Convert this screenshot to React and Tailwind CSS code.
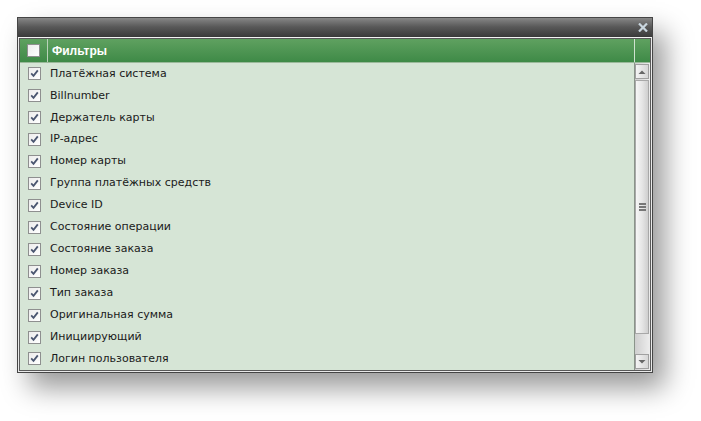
import React from "react";

const items = [
  "Платёжная система",
  "Billnumber",
  "Держатель карты",
  "IP-адрес",
  "Номер карты",
  "Группа платёжных средств",
  "Device ID",
  "Состояние операции",
  "Состояние заказа",
  "Номер заказа",
  "Тип заказа",
  "Оригинальная сумма",
  "Инициирующий",
  "Логин пользователя",
];

function Box({ checked }) {
  return (
    <div className="w-[13px] h-[13px] border border-[#8e8f8f] bg-gradient-to-br from-[#d4d4d4] to-white flex items-center justify-center">
      <div className="w-[11px] h-[11px] bg-gradient-to-br from-[#ececec] to-white flex items-center justify-center">
        {checked && (
          <svg width="9" height="9" viewBox="0 0 9 9">
            <path d="M1.2 4.4 L3.5 6.8 L7.8 1.4" fill="none" stroke="#4a5670" strokeWidth="1.8" />
          </svg>
        )}
      </div>
    </div>
  );
}

function Arrow({ up }) {
  return (
    <div className="w-[14px] h-[15px] border border-[#a0a0a0] bg-gradient-to-r from-[#f4f4f4] to-[#d6d6d6] flex items-center justify-center">
      <svg width="8" height="6" viewBox="0 0 8 6">
        {up ? (
          <path d="M0.5 5 L4 1.5 L7.5 5 Z" fill="#666" />
        ) : (
          <path d="M0.5 1 L7.5 1 L4 4.5 Z" fill="#666" />
        )}
      </svg>
    </div>
  );
}

export default function App() {
  return (
    <div className="w-[701px] h-[421px] bg-white pt-[17px] pl-[17px]" style={{ fontFamily: "'DejaVu Sans', sans-serif" }}>
      <div className="w-[636px] h-[356px] border border-[#454545] bg-[#e9e9e9] flex flex-col shadow-[12px_15px_26px_rgba(0,0,0,0.4)]">
        <div className="h-[18px] bg-gradient-to-b from-[#878787] via-[#585858] to-[#3d3d3d] flex items-center justify-end pr-[4px] shrink-0">
          <svg width="10" height="9" viewBox="0 0 10 9">
            <path d="M1 0.5 L9 8.5 M9 0.5 L1 8.5" stroke="#c9d6df" strokeWidth="2.2" />
          </svg>
        </div>
        <div className="h-px bg-[#3a3a3a] shrink-0" />
        <div className="h-px bg-[#f4f4f4] shrink-0" />
        <div className="flex-1 mx-px mb-px border border-[#5a5a5a] flex flex-col min-h-0">
          <div className="h-[24px] flex bg-gradient-to-b from-[#5fa160] to-[#3e8a47] shrink-0 border-b border-[#9ab99a]">
            <div className="w-[28px] flex items-center justify-center border-r border-[#b9d2b9]">
              <Box checked={false} />
            </div>
            <div className="flex-1 flex items-center pl-[4px] text-white font-bold text-[12px]" style={{ fontFamily: "'Liberation Sans', sans-serif" }}>Фильтры</div>
            <div className="w-[16px] border-l border-[#cfe2cf]" />
          </div>
          <div className="flex-1 flex min-h-0 bg-[#d6e5d6]">
            <div className="flex-1 flex flex-col">
              {items.map((t) => (
                <div key={t} className="h-[22px] flex items-center">
                  <div className="w-[28px] flex justify-center">
                    <Box checked />
                  </div>
                  <div className="pl-[2px] text-[11px] text-[#1a1a1a]">{t}</div>
                </div>
              ))}
            </div>
            <div className="w-[16px] border-l border-[#8a948a] bg-gradient-to-r from-[#cfcfcf] to-[#ededed] flex flex-col items-start py-[1px]">
              <Arrow up />
              <div className="w-[14px] h-[254px] mt-[1px] border border-[#a8a8a8] bg-gradient-to-r from-[#f6f6f6] via-[#e6e6e6] to-[#cfcfcf] flex flex-col items-center justify-center gap-[1px]">
                <div className="w-[7px] h-[2px] bg-[#777]" />
                <div className="w-[7px] h-[2px] bg-[#777]" />
                <div className="w-[7px] h-[2px] bg-[#777]" />
              </div>
              <div className="flex-1" />
              <Arrow />
            </div>
          </div>
        </div>
      </div>
    </div>
  );
}
